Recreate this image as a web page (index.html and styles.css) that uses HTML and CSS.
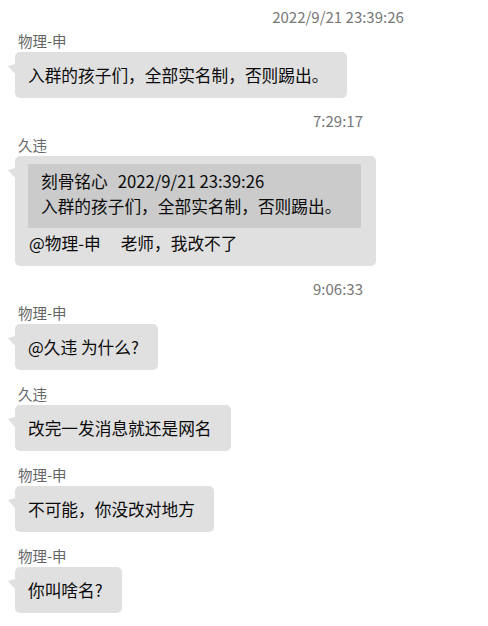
FILE: index.html
```html
<!DOCTYPE html>
<html lang="zh-CN">
<head>
<meta charset="utf-8">
<link rel="stylesheet" href="styles.css">
</head>
<body>
<div class="chat">
  <div class="time first">2022/9/21 23:39:26</div>
  <div class="msg">
    <div class="name">物理-申</div>
    <div class="bubble">入群的孩子们，全部实名制，否则踢出。</div>
  </div>

  <div class="time">7:29:17</div>
  <div class="msg">
    <div class="name">久违</div>
    <div class="bubble quoted">
      <div class="quote">
        <div>刻骨铭心<span class="sp-quote">2022/9/21 23:39:26</span></div>
        <div>入群的孩子们，全部实名制，否则踢出。</div>
      </div>
      <div class="reply">@物理-申<span class="sp-reply">老师，我改不了</span></div>
    </div>
  </div>

  <div class="time">9:06:33</div>
  <div class="msg">
    <div class="name">物理-申</div>
    <div class="bubble">@久违 为什么?</div>
  </div>
  <div class="msg gap">
    <div class="name">久违</div>
    <div class="bubble">改完一发消息就还是网名</div>
  </div>
  <div class="msg gap">
    <div class="name">物理-申</div>
    <div class="bubble">不可能，你没改对地方</div>
  </div>
  <div class="msg gap">
    <div class="name">物理-申</div>
    <div class="bubble">你叫啥名?</div>
  </div>
</div>
</body>
</html>
```

FILE: styles.css
```css
html, body {
  margin: 0;
  padding: 0;
  background: #ffffff;
  overflow: hidden;
}

.chat {
  display: flex;
  flex-direction: column;
  align-items: flex-start;
  padding: 0 0 0 15px;
  font-family: "Noto Sans CJK SC", "Noto Sans", sans-serif;
  color: #0a0a0a;
}

.time {
  width: 200px;
  margin: 13px 0 5px 223px;
  text-align: center;
  font-size: 15px;
  line-height: 20px;
  color: #777777;
}

.time.first {
  margin-top: 7px;
}

.msg {
  display: flex;
  flex-direction: column;
  align-items: flex-start;
}

.msg.gap {
  margin-top: 15px;
}

.name {
  font-size: 14.5px;
  line-height: 18px;
  color: #666666;
  margin: 0 0 2px 3px;
}

.bubble {
  position: relative;
  background: #e0e0e0;
  border-radius: 5px;
  font-size: 16.7px;
  line-height: 20px;
  padding: 13px 19px 13px 13px;
  white-space: nowrap;
}

.bubble::before {
  content: "";
  position: absolute;
  left: -7px;
  top: 12px;
  width: 0;
  height: 0;
  border-right: 7px solid #e0e0e0;
  border-top: 2px solid transparent;
  border-bottom: 8px solid transparent;
}

.bubble.quoted {
  padding: 8px 15px 11px 13px;
}

.quote {
  background: #cbcbcb;
  padding: 5px 20px 9px 13px;
  line-height: 25px;
}

.sp-quote {
  margin-left: 10px;
}

.reply {
  margin-top: 3px;
  line-height: 24px;
  padding-left: 1px;
}

.sp-reply {
  margin-left: 20px;
}
```
